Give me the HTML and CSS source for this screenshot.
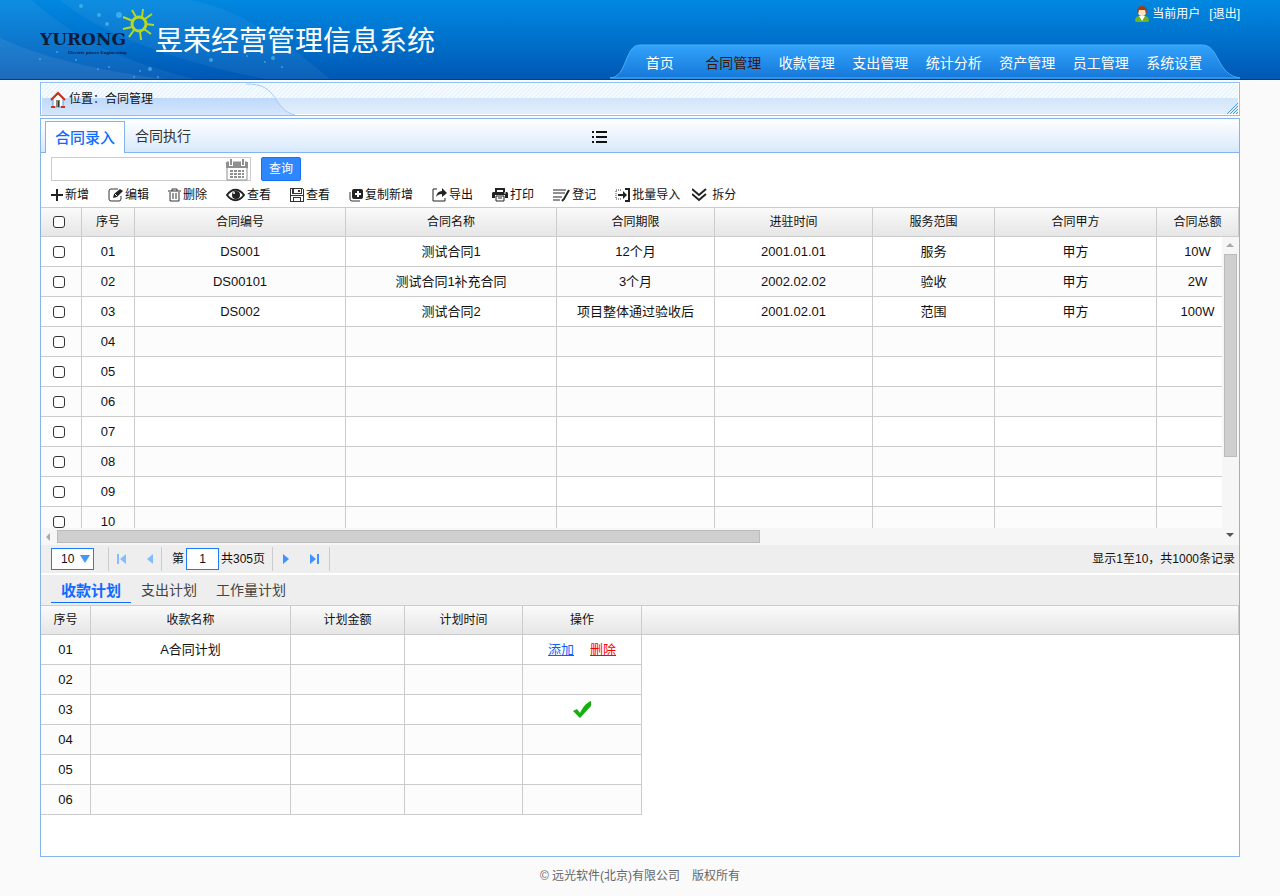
FILE: index.html
```html
<!DOCTYPE html>
<html lang="zh-CN">
<head>
    <meta charset="utf-8">
    <title>昱荣经营管理信息系统</title>
    <link rel="stylesheet" href="styles.css">
</head>
<body>
    <header class="header">
        <svg class="headerBg" width="450" height="79" viewBox="0 0 450 79" aria-hidden="true">
            <path d="M32 0Q90 55 195 79H0V0z" fill="#fff" opacity=".05"/>
            <path d="M0 38Q60 66 165 79H0z" fill="#fff" opacity=".07"/>
            <path d="M60 0Q120 50 265 79H330Q250 10 190 0z" fill="#fff" opacity=".05"/>
            <g fill="#5cc4f5" opacity=".6">
                <circle cx="81" cy="6" r="2"/><circle cx="99" cy="15" r="2"/><circle cx="119" cy="15" r="3"/>
                <circle cx="107" cy="24" r="2"/><circle cx="40" cy="59" r="1"/><circle cx="76" cy="60" r="1"/>
                <circle cx="57" cy="52" r="1"/><circle cx="98" cy="69" r="1"/><circle cx="109" cy="67" r="1"/>
                <circle cx="140" cy="71" r="1"/><circle cx="150" cy="69" r="2"/><circle cx="134" cy="77" r="1"/>
                <circle cx="158" cy="77" r="1"/><circle cx="211" cy="60" r="2"/><circle cx="247" cy="56" r="1"/>
                <circle cx="265" cy="62" r="1"/><circle cx="273" cy="58" r="2"/><circle cx="282" cy="67" r="1"/>
            </g>
        </svg>
        <div class="headerInner">
            <div class="brand">
                <svg class="logo" width="115" height="60" viewBox="0 0 115 60" role="img" aria-label="YURONG">
                    <g fill="none" stroke="#b5d922">
                        <circle cx="99" cy="24" r="7" stroke-width="3"/>
                        <path d="M102 17l1-8M105 19l7-5M106 24l8 1M104 29l7 5M100 31l1 9M94 30l-5 7M92 27l-9 2M93 21l-10-4M96 17l-4-7" stroke-width="2"/>
                    </g>
                    <text x="0" y="45" class="logoName">YURONG</text>
                    <text x="28" y="54" class="logoSub">Electric power Engineering</text>
                </svg>
                <h1>昱荣经营管理信息系统</h1>
            </div>
            <div class="side">
                <div class="user">
                    <svg width="14" height="16" viewBox="0 0 14 16" aria-hidden="true">
                        <path d="M0 15q0-5 5-5h4q5 0 5 5l-1 1H1z" fill="#6fb31d"/>
                        <path d="M4 10h6l-3 5z" fill="#fff"/>
                        <circle cx="7" cy="6" r="4" fill="#ffe3c4"/>
                        <path d="M2 6q0-6 5-6t5 6l-1 2-1-4-6 0-1 4z" fill="#a43c12"/>
                    </svg>
                    <span>当前用户</span>
                    <a href="#">[退出]</a>
                </div>
                <nav class="nav">
                    <svg class="navBg" viewBox="0 0 630 35" preserveAspectRatio="none" aria-hidden="true">
                        <defs>
                            <linearGradient id="navFill" x2="0" y2="1">
                                <stop offset="0" stop-color="#32a3fb"/>
                                <stop offset="1" stop-color="#1577d9"/>
                            </linearGradient>
                        </defs>
                        <path d="M0 35C18 33 14 1 30 1H592C610 1 606 31 630 35z" fill="url(#navFill)"/>
                        <path d="M0 34C18 33 14 1 30 1H592C610 1 606 31 630 34z" fill="none" stroke="#48b0f8"/>
                    </svg>
                    <a href="#">首页</a>
                    <a href="#" class="current">合同管理</a>
                    <a href="#">收款管理</a>
                    <a href="#">支出管理</a>
                    <a href="#">统计分析</a>
                    <a href="#">资产管理</a>
                    <a href="#">员工管理</a>
                    <a href="#">系统设置</a>
                </nav>
            </div>
        </div>
    </header>

    <div class="container">
        <div class="crumb">
            <svg class="crumbBg" width="260" height="32" viewBox="0 0 260 32" aria-hidden="true">
                <defs>
                    <linearGradient id="crumbFill" x2="0" y2="1">
                        <stop offset="0" stop-color="#bfd9fb"/>
                        <stop offset="1" stop-color="#d5e6fc"/>
                    </linearGradient>
                </defs>
                <path d="M0 15H233C240 25 244 31 253 32H0z" fill="url(#crumbFill)"/>
                <path d="M204 1C238 0 230 27 253 32" fill="none" stroke="#a6cbf7"/>
            </svg>
            <svg class="house" width="16" height="17" viewBox="0 0 16 17" aria-hidden="true">
                <path d="M3 8l5-5 5 5v8H3z" fill="#fff" stroke="#5b9bd5"/>
                <path d="M6 9h4v7H6z" fill="#8a8a7a"/>
                <path d="M8 10h1v6H8z" fill="#333"/>
                <path d="M1 9l7-7 7 7" fill="none" stroke="#d42a15" stroke-width="2"/>
                <path d="M1 16h4M11 16h4" stroke="#d4301f" stroke-width="2"/>
            </svg>
            <span>位置：合同管理</span>
            <svg class="grip" width="12" height="12" viewBox="0 0 12 12" aria-hidden="true">
                <path d="M1 12L12 1M4 12l8-8M7 12l5-5M10 12l2-2" stroke="#3f9be8"/>
            </svg>
        </div>

        <main class="panel">
            <div class="tabs">
                <a href="#" class="tab active">合同录入</a>
                <a href="#" class="tab">合同执行</a>
                <svg class="listIcon" width="15" height="13" viewBox="0 0 15 13" aria-hidden="true">
                    <path d="M0 1h2M4 1h11M0 6h2M4 6h11M0 11h2M4 11h11" stroke="#111" stroke-width="2"/>
                </svg>
            </div>

            <form class="search">
                <div class="dateBox">
                    <input type="text" aria-label="查询日期">
                    <svg width="22" height="22" viewBox="0 0 22 22" aria-hidden="true">
                        <path d="M1 3h20v18H1z" fill="#fff" stroke="#8f8f8f"/>
                        <path d="M0 3h22v6H0z" fill="#8f8f8f"/>
                        <path d="M5 1v6M17 1v6" stroke="#fff" stroke-width="4"/>
                        <path d="M5 0v6M17 0v6" stroke="#8f8f8f" stroke-width="2"/>
                        <path d="M4 12h14M4 15h14M4 18h14" stroke="#8f8f8f" stroke-width="2" stroke-dasharray="3 1"/>
                    </svg>
                </div>
                <button type="button" class="query">查询</button>
            </form>

            <div class="toolbar">
                <button type="button"><svg width="12" height="14" viewBox="0 0 12 14"><path d="M0 7h12M6 1v12" stroke="#222" stroke-width="2"/></svg>新增</button>
                <button type="button"><svg width="15" height="14" viewBox="0 0 15 14"><path d="M10 1H3Q1 1 1 3v8q0 2 2 2h8q2 0 2-2V8" fill="none" stroke="#333"/><path d="M5 10l1-4 6-5 3 2-6 6z" fill="#222"/><path d="M7 6l2 2" stroke="#fff"/></svg>编辑</button>
                <button type="button"><svg width="13" height="14" viewBox="0 0 13 14" fill="none" stroke="#333"><path d="M0 3h13M4 3V1h5v2M2 4v9h9V4M5 5v6M8 5v6"/></svg>删除</button>
                <button type="button"><svg width="19" height="14" viewBox="0 0 19 14"><path d="M1 7C6 0 13 0 18 7 13 14 6 14 1 7z" fill="#fff" stroke="#222" stroke-width="2"/><circle cx="10" cy="7" r="4" fill="#222"/><circle cx="8" cy="5" r="1" fill="#fff"/></svg>查看</button>
                <button type="button"><svg width="14" height="14" viewBox="0 0 14 14" shape-rendering="crispEdges"><path d="M0 0h13v1h1v13H0z" fill="#333"/><path d="M1 1h2v5h9V1h1v12H1z" fill="#fff"/><path d="M4 1h7v4H4z" fill="#fff"/><path d="M8 2h2v2H8zM1 7h12v1H1zM3 9h8v1H3zM3 10h1v3H3zM10 10h1v3h-1zM2 1h1v5H2zM11 1h1v5h-1zM3 5h8v1H3z" fill="#333"/></svg>查看</button>
                <button type="button"><svg width="14" height="14" viewBox="0 0 14 14"><path d="M1 4v7q0 2 2 2h8" fill="none" stroke="#333"/><rect x="3" y="1" width="11" height="10" rx="2" fill="#222"/><path d="M6 6h6M9 3v6" stroke="#fff" stroke-width="2"/></svg>复制新增</button>
                <button type="button"><svg width="15" height="14" viewBox="0 0 15 14"><path d="M5 1H1v12h12v-3" fill="none" stroke="#222"/><path d="M4 9q1-6 6-6V0l5 5-5 4V6q-4 0-6 3z" fill="#222"/></svg>导出</button>
                <button type="button"><svg width="16" height="14" viewBox="0 0 16 14"><path d="M4 4V1h8v3" fill="none" stroke="#222" stroke-width="2"/><path d="M1 4h14l1 1v5h-3V7H3v3H0V5z" fill="#222"/><path d="M4 8h8v5H4zM6 10h4" fill="#fff" stroke="#222"/><path d="M12 5h2" stroke="#fff"/></svg>打印</button>
                <button type="button"><svg width="17" height="14" viewBox="0 0 17 14"><path d="M0 2h13M0 5h12M0 9h9M0 12h7" stroke="#222"/><path d="M16 2l-5 9-2 2" fill="none" stroke="#222" stroke-width="2"/></svg>登记</button>
                <div class="toolGroup">
                    <button type="button"><svg width="15" height="14" viewBox="0 0 15 14"><path d="M6 2H1v9h5" fill="none" stroke="#999" stroke-width="2" stroke-dasharray="1 1"/><path d="M10 1h4v12h-4" fill="none" stroke="#222" stroke-width="2"/><path d="M3 6h5V3l4 4-4 4V8H3z" fill="#222"/></svg>批量导入</button>
                    <button type="button"><svg width="18" height="14" viewBox="0 0 18 14"><path d="M0 1l7 6 7-6M0 6l7 6 7-6" fill="none" stroke="#222" stroke-width="2"/></svg>拆分</button>
                </div>
            </div>

            <div class="gridBox">
                <table class="grid">
                    <colgroup>
                        <col class="cCheck"><col class="cNo"><col class="cWide"><col class="cWide"><col class="cDate"><col class="cDate"><col class="cScope"><col class="cParty"><col class="cSum">
                    </colgroup>
                    <thead>
                        <tr>
                            <th><input type="checkbox" aria-label="全选"></th>
                            <th>序号</th><th>合同编号</th><th>合同名称</th><th>合同期限</th><th>进驻时间</th><th>服务范围</th><th>合同甲方</th><th>合同总额</th>
                        </tr>
                    </thead>
                    <tbody>
                        <tr><td><input type="checkbox" aria-label="01"></td><td>01</td><td>DS001</td><td>测试合同1</td><td>12个月</td><td>2001.01.01</td><td>服务</td><td>甲方</td><td>10W</td></tr>
                        <tr><td><input type="checkbox" aria-label="02"></td><td>02</td><td>DS00101</td><td>测试合同1补充合同</td><td>3个月</td><td>2002.02.02</td><td>验收</td><td>甲方</td><td>2W</td></tr>
                        <tr><td><input type="checkbox" aria-label="03"></td><td>03</td><td>DS002</td><td>测试合同2</td><td>项目整体通过验收后</td><td>2001.02.01</td><td>范围</td><td>甲方</td><td>100W</td></tr>
                        <tr><td><input type="checkbox" aria-label="04"></td><td>04</td><td></td><td></td><td></td><td></td><td></td><td></td><td></td></tr>
                        <tr><td><input type="checkbox" aria-label="05"></td><td>05</td><td></td><td></td><td></td><td></td><td></td><td></td><td></td></tr>
                        <tr><td><input type="checkbox" aria-label="06"></td><td>06</td><td></td><td></td><td></td><td></td><td></td><td></td><td></td></tr>
                        <tr><td><input type="checkbox" aria-label="07"></td><td>07</td><td></td><td></td><td></td><td></td><td></td><td></td><td></td></tr>
                        <tr><td><input type="checkbox" aria-label="08"></td><td>08</td><td></td><td></td><td></td><td></td><td></td><td></td><td></td></tr>
                        <tr><td><input type="checkbox" aria-label="09"></td><td>09</td><td></td><td></td><td></td><td></td><td></td><td></td><td></td></tr>
                        <tr><td><input type="checkbox" aria-label="10"></td><td>10</td><td></td><td></td><td></td><td></td><td></td><td></td><td></td></tr>
                    </tbody>
                </table>
                <div class="vScroll">
                    <span class="arrowUp"></span>
                    <span class="vThumb"></span>
                    <span class="arrowDown"></span>
                </div>
                <div class="hScroll">
                    <span class="arrowLeft"></span>
                    <span class="hThumb"></span>
                </div>
            </div>

            <div class="pager">
                <div class="sizeBox">
                    <select aria-label="每页条数"><option>10</option><option>20</option><option>50</option></select>
                    <svg width="10" height="8" viewBox="0 0 10 8" aria-hidden="true"><path d="M0 0h10L5 8z" fill="#4596ff"/></svg>
                </div>
                <div class="pageBtns first">
                    <button type="button" aria-label="首页"><svg width="10" height="10" viewBox="0 0 10 10"><path d="M0 0h2v10H0zM9 0v10L3 5z" fill="#84bcff"/></svg></button>
                    <button type="button" aria-label="上一页"><svg width="6" height="10" viewBox="0 0 6 10"><path d="M6 0v10L0 5z" fill="#84bcff"/></svg></button>
                </div>
                <label class="pageNo">第<input type="text" value="1">共305页</label>
                <div class="pageBtns">
                    <button type="button" aria-label="下一页"><svg width="6" height="10" viewBox="0 0 6 10"><path d="M0 0v10l6-5z" fill="#3f92ff"/></svg></button>
                    <button type="button" aria-label="末页"><svg width="10" height="10" viewBox="0 0 10 10"><path d="M8 0h2v10H8zM1 0v10l6-5z" fill="#3f92ff"/></svg></button>
                </div>
                <span class="total">显示1至10，共1000条记录</span>
            </div>

            <div class="subTabs">
                <a href="#" class="active">收款计划</a>
                <a href="#">支出计划</a>
                <a href="#">工作量计划</a>
            </div>

            <table class="grid plan">
                <colgroup>
                    <col class="pNo"><col class="pName"><col class="pSum"><col class="pTime"><col class="pOp"><col>
                </colgroup>
                <thead>
                    <tr><th>序号</th><th>收款名称</th><th>计划金额</th><th>计划时间</th><th>操作</th><th></th></tr>
                </thead>
                <tbody>
                    <tr><td>01</td><td>A合同计划</td><td></td><td></td><td><div class="ops"><a href="#" class="add">添加</a><a href="#" class="del">删除</a></div></td></tr>
                    <tr><td>02</td><td></td><td></td><td></td><td></td></tr>
                    <tr><td>03</td><td></td><td></td><td></td><td><div class="ops"><svg width="18" height="18" viewBox="0 0 18 18" role="img" aria-label="完成"><path d="M0 10l4-2 3 4C10 6 13 2 18 0v5L7 17z" fill="#14b00c"/></svg></div></td></tr>
                    <tr><td>04</td><td></td><td></td><td></td><td></td></tr>
                    <tr><td>05</td><td></td><td></td><td></td><td></td></tr>
                    <tr><td>06</td><td></td><td></td><td></td><td></td></tr>
                </tbody>
            </table>
        </main>

        <footer class="footer">© 远光软件(北京)有限公司　版权所有</footer>
    </div>
</body>
</html>
```

FILE: styles.css
```css
*{
    padding: 0;
    margin: 0;
    box-sizing: border-box;
}
body {
    background-color: #fafafa;
    color: #111;
    font-family: "Liberation Sans", "Noto Sans CJK SC", sans-serif;
    font-size: 12px;
    line-height: 18px;
}
a {
    color: inherit;
    text-decoration: none;
}
button, input, select {
    font: inherit;
    color: inherit;
}
button {
    border: none;
    background: none;
    cursor: pointer;
}
svg {
    display: block;
    flex: none;
}

/* header */
.header {
    position: relative;
    height: 80px;
    background: linear-gradient(#0088e0, #0074cf 45%, #0058b4);
    border-bottom: 1px solid #003f95;
    color: #fff;
}
.headerBg {
    position: absolute;
    left: 0;
    top: 0;
}
.headerInner {
    position: relative;
    display: flex;
    justify-content: space-between;
    margin: 0 40px;
    height: 79px;
}
.brand {
    display: flex;
}
.brand h1 {
    font-size: 28px;
    font-weight: normal;
    line-height: 40px;
    padding-top: 22px;
    white-space: nowrap;
}
.logoName {
    font: bold 17px "DejaVu Serif", serif;
    fill: #0b1c3c;
}
.logoSub {
    font: bold 5px "Liberation Serif", serif;
    fill: #0b1c3c;
}
.side {
    display: flex;
    flex-direction: column;
    justify-content: space-between;
    align-items: flex-end;
}
.user {
    display: flex;
    align-items: center;
    gap: 3px;
    padding-top: 5px;
}
.user a {
    padding-left: 6px;
}
.nav {
    position: relative;
    display: flex;
    width: 630px;
    height: 35px;
    padding: 0 29px 0 13px;
    font-size: 14px;
    line-height: 38px;
}
.navBg {
    position: absolute;
    left: 0;
    top: 0;
    width: 100%;
    height: 100%;
}
.nav a {
    position: relative;
    flex: 1;
    text-align: center;
}
.nav .current {
    color: #3b1708;
}

/* breadcrumb */
.container {
    margin: 0 40px;
    padding-top: 2px;
}
.crumb {
    position: relative;
    display: flex;
    align-items: center;
    gap: 3px;
    height: 34px;
    padding-left: 9px;
    border: 1px solid #8fbef7;
    box-shadow: inset 0 0 0 1px #fff;
    background: linear-gradient(transparent 15px, #d3e5fa 15px, #e3effd), repeating-linear-gradient(135deg, #f8fcff 0, #f8fcff 1px, #e0effc 2px, #f8fcff 3px);
}
.crumbBg {
    position: absolute;
    left: 1px;
    top: 0;
}
.house, .crumb span {
    position: relative;
}
.grip {
    position: absolute;
    right: 1px;
    bottom: 1px;
}

/* main panel */
.panel {
    margin-top: 2px;
    padding-bottom: 41px;
    border: 1px solid #82b4ee;
    background-color: #fff;
}
.tabs {
    position: relative;
    display: flex;
    align-items: flex-end;
    height: 34px;
    padding-left: 4px;
    background: linear-gradient(#fff, #d8e9fb);
    border-bottom: 1px solid #82b4ee;
}
.tab {
    padding: 0 10px;
    font-size: 14px;
    line-height: 32px;
    color: #333;
}
.tab.active {
    width: 80px;
    padding: 0;
    margin-bottom: -1px;
    border: 1px solid #82b4ee;
    border-bottom: none;
    background-color: #fff;
    color: #0f6bff;
    font-size: 15px;
    font-weight: 500;
    line-height: 31px;
    text-align: center;
}
.listIcon {
    position: absolute;
    left: 46%;
    top: 12px;
}
.search {
    display: flex;
    gap: 10px;
    padding: 4px 10px 0;
}
.dateBox {
    position: relative;
    width: 200px;
}
.dateBox input {
    display: block;
    width: 100%;
    height: 24px;
    padding: 0 28px 0 4px;
    border: 1px solid #ccc;
}
.dateBox svg {
    position: absolute;
    right: 3px;
    top: 2px;
}
.query {
    width: 40px;
    height: 24px;
    border: 1px solid #1473f5;
    border-radius: 2px;
    background-color: #2f87ff;
    color: #fff;
}
.toolbar {
    display: flex;
    gap: 19px;
    padding: 5px 10px 3px;
}
.toolbar button {
    display: flex;
    align-items: center;
    gap: 2px;
    white-space: nowrap;
}
.toolGroup {
    display: flex;
    gap: 12px;
}

/* tables */
.gridBox {
    position: relative;
    height: 338px;
    overflow: hidden;
}
.grid {
    width: 100%;
    table-layout: fixed;
    border-collapse: separate;
    border-spacing: 0;
    text-align: center;
}
.grid th {
    height: 30px;
    border: 1px solid #ccc;
    border-left: none;
    background: linear-gradient(#fafafa, #e6e6e6);
    font-weight: normal;
    white-space: nowrap;
}
.grid td {
    height: 30px;
    border: 1px solid #ccc;
    border-width: 0 1px 1px 0;
    font-size: 13px;
    white-space: nowrap;
}
.grid tbody tr:nth-child(even) {
    background-color: #fcfcfc;
}
.grid input {
    appearance: none;
    display: block;
    width: 12px;
    height: 12px;
    margin-left: 12px;
    border: 1px solid #333;
    border-radius: 3px;
    background-color: #fff;
}
.cCheck { width: 41px; }
.cNo { width: 53px; }
.cWide { width: 211px; }
.cDate { width: 158px; }
.cScope { width: 122px; }
.cParty { width: 162px; }
.cSum { width: 82px; }

.vScroll {
    position: absolute;
    right: 0;
    top: 30px;
    bottom: 0;
    width: 17px;
    background-color: #f6f6f6;
}
.hScroll {
    position: absolute;
    left: 0;
    right: 17px;
    bottom: 0;
    height: 17px;
    background-color: #f6f6f6;
}
.vThumb {
    position: absolute;
    left: 2px;
    top: 17px;
    width: 13px;
    height: 66%;
    border: 1px solid #bbb;
    background-color: #cfcfcf;
}
.hThumb {
    position: absolute;
    left: 16px;
    top: 2px;
    width: calc(60% - 6px);
    height: 13px;
    border: 1px solid #bbb;
    background-color: #cfcfcf;
}
.arrowUp, .arrowDown {
    position: absolute;
    left: 4px;
    border: 4px solid transparent;
}
.arrowUp {
    top: 2px;
    border-bottom-color: #aaa;
}
.arrowDown {
    bottom: 4px;
    border-top-color: #555;
}
.arrowLeft {
    position: absolute;
    left: 1px;
    top: 5px;
    border: 4px solid transparent;
    border-right-color: #aaa;
}

/* pager */
.pager {
    display: flex;
    align-items: center;
    height: 28px;
    padding: 0 4px 0 10px;
    background-color: #eee;
}
.sizeBox {
    position: relative;
}
.sizeBox select {
    appearance: none;
    display: block;
    width: 43px;
    height: 22px;
    padding-left: 9px;
    border: 1px solid #1f7cf7;
    background-color: #fff;
}
.sizeBox svg {
    position: absolute;
    right: 4px;
    top: 7px;
    pointer-events: none;
}
.pageBtns {
    display: flex;
    align-items: center;
    justify-content: center;
    gap: 20px;
    width: 58px;
    height: 24px;
    border: 1px solid #ccc;
    border-width: 0 1px;
}
.pageBtns.first {
    width: 54px;
    margin-left: 14px;
}
.pageNo {
    display: flex;
    align-items: center;
    gap: 2px;
    padding: 0 7px 0 10px;
}
.pageNo input {
    width: 33px;
    height: 22px;
    border: 1px solid #1f7cf7;
    background-color: #fff;
    text-align: center;
}
.total {
    margin-left: auto;
}

.subTabs {
    display: flex;
    align-items: center;
    margin-top: 2px;
    height: 30px;
    padding-left: 10px;
    background-color: #eee;
    color: #444;
    font-size: 14px;
}
.subTabs a {
    padding: 0 9px 0 10px;
    line-height: 22px;
}
.subTabs .active {
    padding: 2px 10px 0;
    border-bottom: 1px solid #0f6bff;
    color: #0f6bff;
    font-size: 15px;
    font-weight: bold;
}

.pNo { width: 50px; }
.pName { width: 200px; }
.pSum { width: 114px; }
.pTime { width: 118px; }
.pOp { width: 119px; }
.ops {
    display: flex;
    justify-content: center;
    gap: 16px;
}
.ops a {
    text-decoration: underline;
}
.add {
    color: #0f5fff;
}
.del {
    color: #f00;
}

.footer {
    padding-top: 10px;
    color: #666;
    text-align: center;
}
```
